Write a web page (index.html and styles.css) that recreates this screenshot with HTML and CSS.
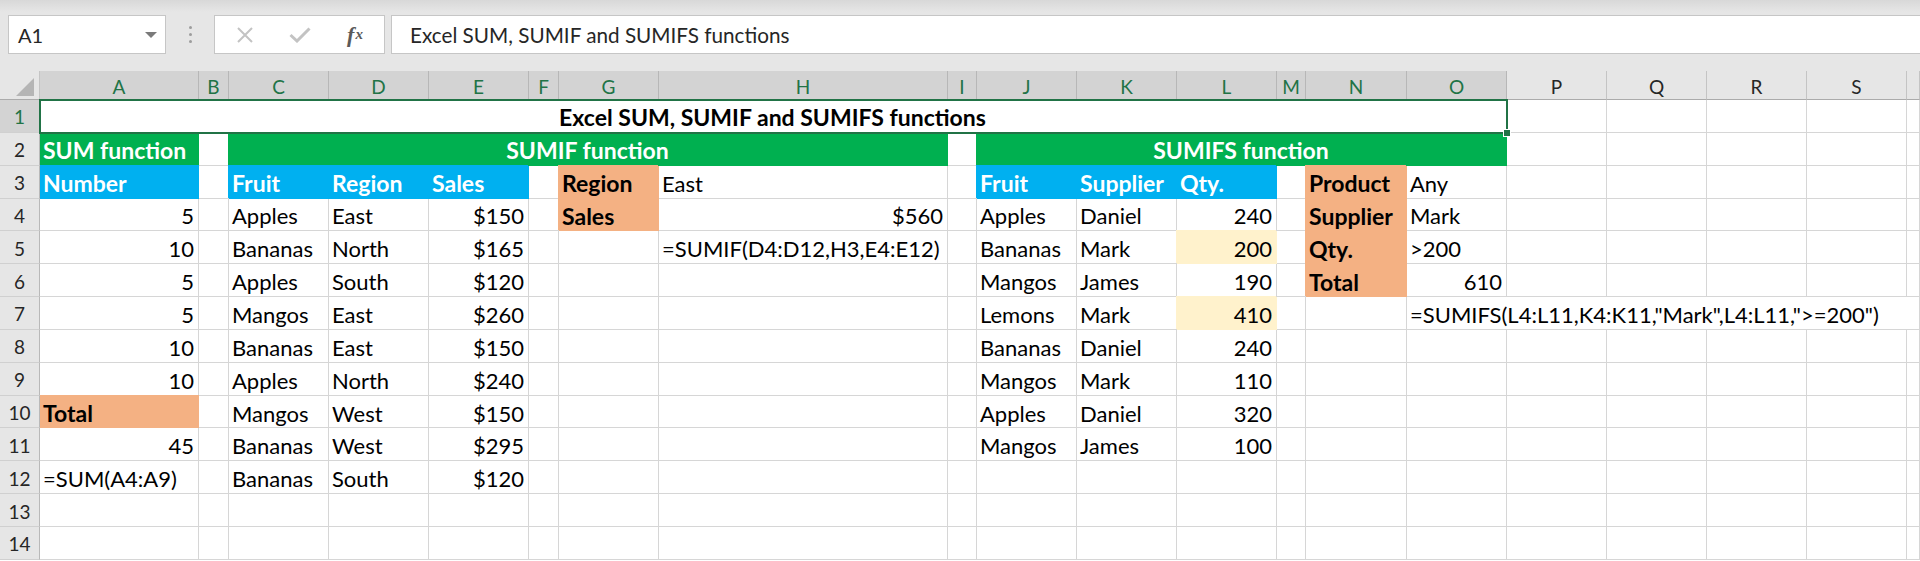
FILE: index.html
```html
<!DOCTYPE html>
<html lang="en">
<head>
<meta charset="utf-8">
<title>Excel SUM, SUMIF and SUMIFS functions</title>
<link rel="stylesheet" href="styles.css">
</head>
<body>
<div class="app">
  <div class="toolbar">
    <div class="namebox"><span>A1</span><span class="caret"></span></div>
    <div class="dots"><span></span><span></span><span></span></div>
    <div class="fxbox">
      <span class="btn btn-x"><svg width="16" height="16" viewBox="0 0 16 16"><path d="M1 1 L15 15 M15 1 L1 15" stroke="#c3c3c3" stroke-width="2" fill="none"/></svg></span>
      <span class="btn btn-ok"><svg width="22" height="16" viewBox="0 0 22 16"><path d="M1.5 8 L8 14 L20.5 1.5" stroke="#c3c3c3" stroke-width="3" fill="none"/></svg></span>
      <span class="btn btn-fx"><i>f</i><sub>x</sub></span>
    </div>
    <div class="fbar">Excel SUM, SUMIF and SUMIFS functions</div>
  </div>

  <div class="sheet">
    <div class="row hdr">
      <div class="corner"><svg width="18" height="18" viewBox="0 0 18 18"><polygon points="18,0 18,18 0,18" fill="#b5b5b5"/></svg></div>
      <div class="ch on">A</div><div class="ch on">B</div><div class="ch on">C</div><div class="ch on">D</div><div class="ch on">E</div><div class="ch on">F</div><div class="ch on">G</div><div class="ch on">H</div><div class="ch on">I</div><div class="ch on">J</div><div class="ch on">K</div><div class="ch on">L</div><div class="ch on">M</div><div class="ch on">N</div><div class="ch on">O</div><div class="ch">P</div><div class="ch">Q</div><div class="ch">R</div><div class="ch">S</div><div class="ch"></div>
    </div>

    <div class="row">
      <div class="rh on">1</div>
      <div class="c m b sel span15">Excel SUM, SUMIF and SUMIFS functions</div>
      <div class="c"></div><div class="c"></div><div class="c"></div><div class="c"></div><div class="c"></div>
    </div>

    <div class="row">
      <div class="rh">2</div>
      <div class="c g ca">SUM function</div>
      <div class="c"></div>
      <div class="c g m span6">SUMIF function</div>
      <div class="c"></div>
      <div class="c g m span6">SUMIFS function</div>
      <div class="c"></div><div class="c"></div><div class="c"></div><div class="c"></div><div class="c"></div>
    </div>

    <div class="row">
      <div class="rh">3</div>
      <div class="c bl ca">Number</div>
      <div class="c"></div>
      <div class="c bl">Fruit</div><div class="c bl">Region</div><div class="c bl">Sales</div>
      <div class="c"></div>
      <div class="c o">Region</div><div class="c">East</div>
      <div class="c"></div>
      <div class="c bl">Fruit</div><div class="c bl">Supplier</div><div class="c bl">Qty.</div>
      <div class="c"></div>
      <div class="c o">Product</div><div class="c">Any</div>
      <div class="c"></div><div class="c"></div><div class="c"></div><div class="c"></div><div class="c"></div>
    </div>

    <div class="row">
      <div class="rh">4</div>
      <div class="c r">5</div>
      <div class="c"></div>
      <div class="c">Apples</div><div class="c">East</div><div class="c r">$150</div>
      <div class="c"></div>
      <div class="c o">Sales</div><div class="c r">$560</div>
      <div class="c"></div>
      <div class="c">Apples</div><div class="c">Daniel</div><div class="c r">240</div>
      <div class="c"></div>
      <div class="c o">Supplier</div><div class="c">Mark</div>
      <div class="c"></div><div class="c"></div><div class="c"></div><div class="c"></div><div class="c"></div>
    </div>

    <div class="row">
      <div class="rh">5</div>
      <div class="c r">10</div>
      <div class="c"></div>
      <div class="c">Bananas</div><div class="c">North</div><div class="c r">$165</div>
      <div class="c"></div>
      <div class="c"></div><div class="c">=SUMIF(D4:D12,H3,E4:E12)</div>
      <div class="c"></div>
      <div class="c">Bananas</div><div class="c">Mark</div><div class="c r y">200</div>
      <div class="c"></div>
      <div class="c o">Qty.</div><div class="c">&gt;200</div>
      <div class="c"></div><div class="c"></div><div class="c"></div><div class="c"></div><div class="c"></div>
    </div>

    <div class="row">
      <div class="rh">6</div>
      <div class="c r">5</div>
      <div class="c"></div>
      <div class="c">Apples</div><div class="c">South</div><div class="c r">$120</div>
      <div class="c"></div>
      <div class="c"></div><div class="c"></div>
      <div class="c"></div>
      <div class="c">Mangos</div><div class="c">James</div><div class="c r">190</div>
      <div class="c"></div>
      <div class="c o">Total</div><div class="c r">610</div>
      <div class="c"></div><div class="c"></div><div class="c"></div><div class="c"></div><div class="c"></div>
    </div>

    <div class="row">
      <div class="rh">7</div>
      <div class="c r">5</div>
      <div class="c"></div>
      <div class="c">Mangos</div><div class="c">East</div><div class="c r">$260</div>
      <div class="c"></div>
      <div class="c"></div><div class="c"></div>
      <div class="c"></div>
      <div class="c">Lemons</div><div class="c">Mark</div><div class="c r y">410</div>
      <div class="c"></div>
      <div class="c"></div>
      <div class="c span6">=SUMIFS(L4:L11,K4:K11,"Mark",L4:L11,"&gt;=200")</div>
    </div>

    <div class="row">
      <div class="rh">8</div>
      <div class="c r">10</div>
      <div class="c"></div>
      <div class="c">Bananas</div><div class="c">East</div><div class="c r">$150</div>
      <div class="c"></div>
      <div class="c"></div><div class="c"></div>
      <div class="c"></div>
      <div class="c">Bananas</div><div class="c">Daniel</div><div class="c r">240</div>
      <div class="c"></div>
      <div class="c"></div><div class="c"></div>
      <div class="c"></div><div class="c"></div><div class="c"></div><div class="c"></div><div class="c"></div>
    </div>

    <div class="row">
      <div class="rh">9</div>
      <div class="c r">10</div>
      <div class="c"></div>
      <div class="c">Apples</div><div class="c">North</div><div class="c r">$240</div>
      <div class="c"></div>
      <div class="c"></div><div class="c"></div>
      <div class="c"></div>
      <div class="c">Mangos</div><div class="c">Mark</div><div class="c r">110</div>
      <div class="c"></div>
      <div class="c"></div><div class="c"></div>
      <div class="c"></div><div class="c"></div><div class="c"></div><div class="c"></div><div class="c"></div>
    </div>

    <div class="row">
      <div class="rh">10</div>
      <div class="c o ca">Total</div>
      <div class="c"></div>
      <div class="c">Mangos</div><div class="c">West</div><div class="c r">$150</div>
      <div class="c"></div>
      <div class="c"></div><div class="c"></div>
      <div class="c"></div>
      <div class="c">Apples</div><div class="c">Daniel</div><div class="c r">320</div>
      <div class="c"></div>
      <div class="c"></div><div class="c"></div>
      <div class="c"></div><div class="c"></div><div class="c"></div><div class="c"></div><div class="c"></div>
    </div>

    <div class="row">
      <div class="rh">11</div>
      <div class="c r">45</div>
      <div class="c"></div>
      <div class="c">Bananas</div><div class="c">West</div><div class="c r">$295</div>
      <div class="c"></div>
      <div class="c"></div><div class="c"></div>
      <div class="c"></div>
      <div class="c">Mangos</div><div class="c">James</div><div class="c r">100</div>
      <div class="c"></div>
      <div class="c"></div><div class="c"></div>
      <div class="c"></div><div class="c"></div><div class="c"></div><div class="c"></div><div class="c"></div>
    </div>

    <div class="row">
      <div class="rh">12</div>
      <div class="c">=SUM(A4:A9)</div>
      <div class="c"></div>
      <div class="c">Bananas</div><div class="c">South</div><div class="c r">$120</div>
      <div class="c"></div>
      <div class="c"></div><div class="c"></div>
      <div class="c"></div>
      <div class="c"></div><div class="c"></div><div class="c"></div>
      <div class="c"></div>
      <div class="c"></div><div class="c"></div>
      <div class="c"></div><div class="c"></div><div class="c"></div><div class="c"></div><div class="c"></div>
    </div>

    <div class="row">
      <div class="rh">13</div>
      <div class="c"></div><div class="c"></div><div class="c"></div><div class="c"></div><div class="c"></div><div class="c"></div><div class="c"></div><div class="c"></div><div class="c"></div><div class="c"></div><div class="c"></div><div class="c"></div><div class="c"></div><div class="c"></div><div class="c"></div><div class="c"></div><div class="c"></div><div class="c"></div><div class="c"></div><div class="c"></div>
    </div>

    <div class="row">
      <div class="rh">14</div>
      <div class="c"></div><div class="c"></div><div class="c"></div><div class="c"></div><div class="c"></div><div class="c"></div><div class="c"></div><div class="c"></div><div class="c"></div><div class="c"></div><div class="c"></div><div class="c"></div><div class="c"></div><div class="c"></div><div class="c"></div><div class="c"></div><div class="c"></div><div class="c"></div><div class="c"></div><div class="c"></div>
    </div>
  </div>
</div>
</body>
</html>
```

FILE: styles.css
```css
html, body {
  margin: 0;
  padding: 0;
}
body {
  width: 1920px;
  height: 561px;
  overflow: hidden;
  background: #ffffff;
  font-family: Lato, "Liberation Sans", sans-serif;
  color: #000;
}
.app {
  display: flex;
  flex-direction: column;
  height: 561px;
}

/* ---------- toolbar ---------- */
.toolbar {
  height: 71px;
  box-sizing: border-box;
  padding-top: 15px;
  display: flex;
  align-items: flex-start;
  background: linear-gradient(#d8d8d8 0px, #e6e6e6 12px, #e6e6e6 100%);
  flex: none;
}
.namebox {
  margin-left: 8px;
  width: 158px;
  height: 39px;
  box-sizing: border-box;
  background: #fff;
  border: 1px solid #c6c6c6;
  display: flex;
  align-items: center;
  justify-content: space-between;
  padding: 0 8px 0 9px;
  font-size: 20px;
  color: #262626;
}
.caret {
  width: 0;
  height: 0;
  border-left: 6px solid transparent;
  border-right: 6px solid transparent;
  border-top: 6px solid #7a7a7a;
}
.dots {
  width: 48px;
  height: 39px;
  display: flex;
  flex-direction: column;
  align-items: center;
  justify-content: center;
  gap: 4px;
}
.dots span {
  width: 3px;
  height: 3px;
  border-radius: 50%;
  background: #9d9d9d;
}
.fxbox {
  width: 171px;
  height: 39px;
  box-sizing: border-box;
  background: #fff;
  border: 1px solid #c6c6c6;
  display: flex;
  align-items: center;
}
.btn {
  display: flex;
  align-items: center;
  justify-content: center;
  height: 100%;
}
.btn-x { width: 59px; }
.btn-ok { width: 52px; }
.btn-fx {
  width: 58px;
  font-family: "Liberation Serif", "DejaVu Serif", serif;
  color: #5a5a5a;
  font-size: 22px;
  font-weight: 700;
}
.btn-fx i { font-style: italic; }
.btn-fx sub {
  font-size: 15px;
  font-style: italic;
  vertical-align: -2px;
  margin-left: 1px;
}
.fbar {
  flex: 1;
  margin-left: 6px;
  height: 39px;
  box-sizing: border-box;
  background: #fff;
  border: 1px solid #c6c6c6;
  border-right: none;
  padding-left: 18px;
  display: flex;
  align-items: center;
  font-size: 20.7px;
  color: #262626;
}

/* ---------- sheet ---------- */
.sheet {
  flex: none;
}
.row {
  display: grid;
  grid-template-columns: 40px 159px 30px 100px 100px 100px 30px 100px 289px 29px 100px 100px 100px 29px 101px 100px 100px 100px 100px 100px 13px;
  height: 32.85px;
}
.row.hdr {
  height: 29px;
  background: #e6e6e6;
}
.corner {
  box-sizing: border-box;
  border-right: 1px solid #c4c4c4;
  border-bottom: 1px solid #ababab;
  display: flex;
  align-items: flex-end;
  justify-content: flex-end;
  padding: 0 5px 3px 0;
}
.ch {
  box-sizing: border-box;
  border-right: 1px solid #c4c4c4;
  border-bottom: 1px solid #ababab;
  display: flex;
  align-items: center;
  justify-content: center;
  font-size: 19px;
  color: #262626;
  padding-top: 2px;
}
.ch.on {
  background: #d3d3d3;
  color: #217346;
  border-right-color: #b7b7b7;
}
.rh {
  box-sizing: border-box;
  background: #e6e6e6;
  border-right: 1px solid #b9b9b9;
  border-bottom: 1px solid #d0d0d0;
  display: flex;
  align-items: center;
  justify-content: center;
  font-size: 19px;
  color: #262626;
  padding-top: 2px;
}
.rh.on {
  background: #d3d3d3;
  color: #217346;
}

.c {
  box-sizing: border-box;
  border-right: 1px solid #d6d6d6;
  border-bottom: 1px solid #d6d6d6;
  display: flex;
  align-items: center;
  padding: 3px 4px 0 3px;
  font-size: 22px;
  white-space: nowrap;
  overflow: hidden;
  min-width: 0;
}
.r { justify-content: flex-end; }
.m { justify-content: center; }
.b { font-weight: 700; font-size: 23px; }

.span15 { grid-column: span 15; }
.span6 { grid-column: span 6; overflow: visible; }

.g {
  background: #00b050;
  border-color: #00b050;
  color: #fff;
  font-weight: 700;
  font-size: 23px;
  box-shadow: -1px -1px 0 #00b050;
}
.bl {
  background: #00b0f0;
  border-color: #00b0f0;
  color: #fff;
  font-weight: 700;
  font-size: 23px;
  box-shadow: -1px -1px 0 #00b0f0;
}
.o {
  background: #f4b183;
  border-color: #f4b183;
  color: #000;
  font-weight: 700;
  font-size: 23px;
  box-shadow: -1px -1px 0 #f4b183;
}
.y {
  background: #fff2cc;
  border-color: #fff2cc;
  box-shadow: -1px -1px 0 #fff2cc;
}
.g.ca { box-shadow: 0 -1px 0 #00b050; }
.bl.ca { box-shadow: 0 -1px 0 #00b0f0; }
.o.ca { box-shadow: 0 -1px 0 #f4b183; }

.sel {
  position: relative;
  overflow: visible;
  outline: 2px solid #217346;
  outline-offset: -1px;
}
.sel::after {
  content: "";
  position: absolute;
  right: -5px;
  bottom: -5px;
  width: 6px;
  height: 6px;
  background: #217346;
  border: 1px solid #fff;
  z-index: 2;
}
```
